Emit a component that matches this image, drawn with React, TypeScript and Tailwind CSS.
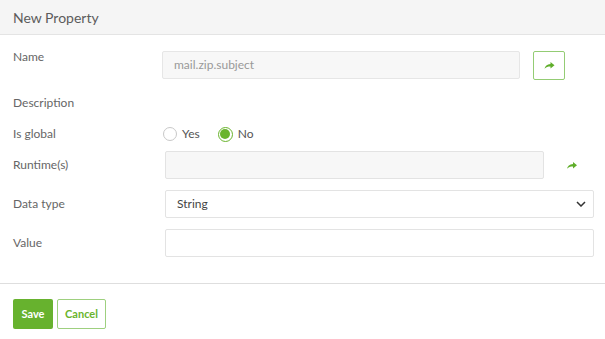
import React from "react";

const Share = ({ className = "" }: { className?: string }) => (
  <svg viewBox="0 0 20 14" className={className} fill="#5fae2a">
    <path d="M12 0 L20 6.5 L12 13 L12 9 C6.5 9 3 10 0 13.5 C1 8 5 4.5 12 4 Z" />
  </svg>
);

export default function App() {
  return (
    <div
      className="w-[605px] h-[339px] bg-white text-[12px] text-[#666]"
      style={{ fontFamily: "Lato, 'Open Sans', sans-serif" }}
    >
      <div className="h-[35px] bg-[#f5f5f5] border-b border-[#e4e4e4] flex items-center px-[13px] text-[14px] text-[#5c5c5c]">
        New Property
      </div>
      <div className="pl-[13px] pr-[11px]">
        {/* Name */}
        <div className="flex items-start mt-[16px]">
          <div className="w-[149px] shrink-0 leading-[14px] mt-[-1px]">Name</div>
          <div className="w-[358px] shrink-0 h-[28px] bg-[#f7f7f7] border border-[#e6e6e6] rounded-[2px] flex items-center px-[11px] text-[#999]">
            mail.zip.subject
          </div>
          <button className="ml-[13px] w-[32px] h-[29px] border border-[#94cc74] rounded-[2px] flex items-center justify-center">
            <Share className="w-[11px] h-[7px]" />
          </button>
        </div>
        {/* Description */}
        <div className="mt-[16px] leading-[14px]">Description</div>
        {/* Is global */}
        <div className="flex items-center mt-[17px] h-[14px]">
          <div className="w-[150px]">Is global</div>
          <div className="flex items-center">
            <span className="w-[14px] h-[14px] rounded-full border border-[#c8c8c8] bg-white" />
            <span className="ml-[5px] text-[#555]">Yes</span>
            <span className="ml-[18px] w-[15px] h-[15px] rounded-full border-[1.5px] border-[#6ab42d] bg-white flex items-center justify-center">
              <span className="w-[10px] h-[10px] rounded-full bg-[#6ab42d]" />
            </span>
            <span className="ml-[5px] text-[#555]">No</span>
          </div>
        </div>
        {/* Runtime */}
        <div className="flex items-center mt-[10px]">
          <div className="w-[152px] shrink-0">Runtime(s)</div>
          <div className="w-[379px] shrink-0 h-[28px] bg-[#f7f7f7] border border-[#e3e3e3] rounded-[2px]" />
          <Share className="ml-[23px] w-[10px] h-[7px]" />
        </div>
        {/* Data type */}
        <div className="flex items-center mt-[11px]">
          <div className="w-[152px] shrink-0">Data type</div>
          <div className="flex-1 h-[28px] bg-white border border-[#e3e3e3] rounded-[2px] flex items-center justify-between pl-[11px] pr-[7px] text-[#444]">
            <span>String</span>
            <svg viewBox="0 0 10 6" className="w-[10px] h-[6px]" fill="none" stroke="#333" strokeWidth="1.5">
              <polyline points="1,1 5,5 9,1" />
            </svg>
          </div>
        </div>
        {/* Value */}
        <div className="flex items-center mt-[11px]">
          <div className="w-[152px] shrink-0">Value</div>
          <div className="flex-1 h-[28px] bg-white border border-[#e3e3e3] rounded-[2px]" />
        </div>
      </div>
      <div className="mt-[26px] border-t border-[#dedede]" />
      <div className="flex px-[13px] mt-[15px] gap-[4px]">
        <button className="w-[40px] h-[30px] bg-[#67b22e] rounded-[2px] text-white font-bold text-[11px]">
          Save
        </button>
        <button className="w-[49px] h-[30px] border border-[#9ed07f] rounded-[2px] text-[#6ab42d] font-bold text-[11px]">
          Cancel
        </button>
      </div>
    </div>
  );
}
